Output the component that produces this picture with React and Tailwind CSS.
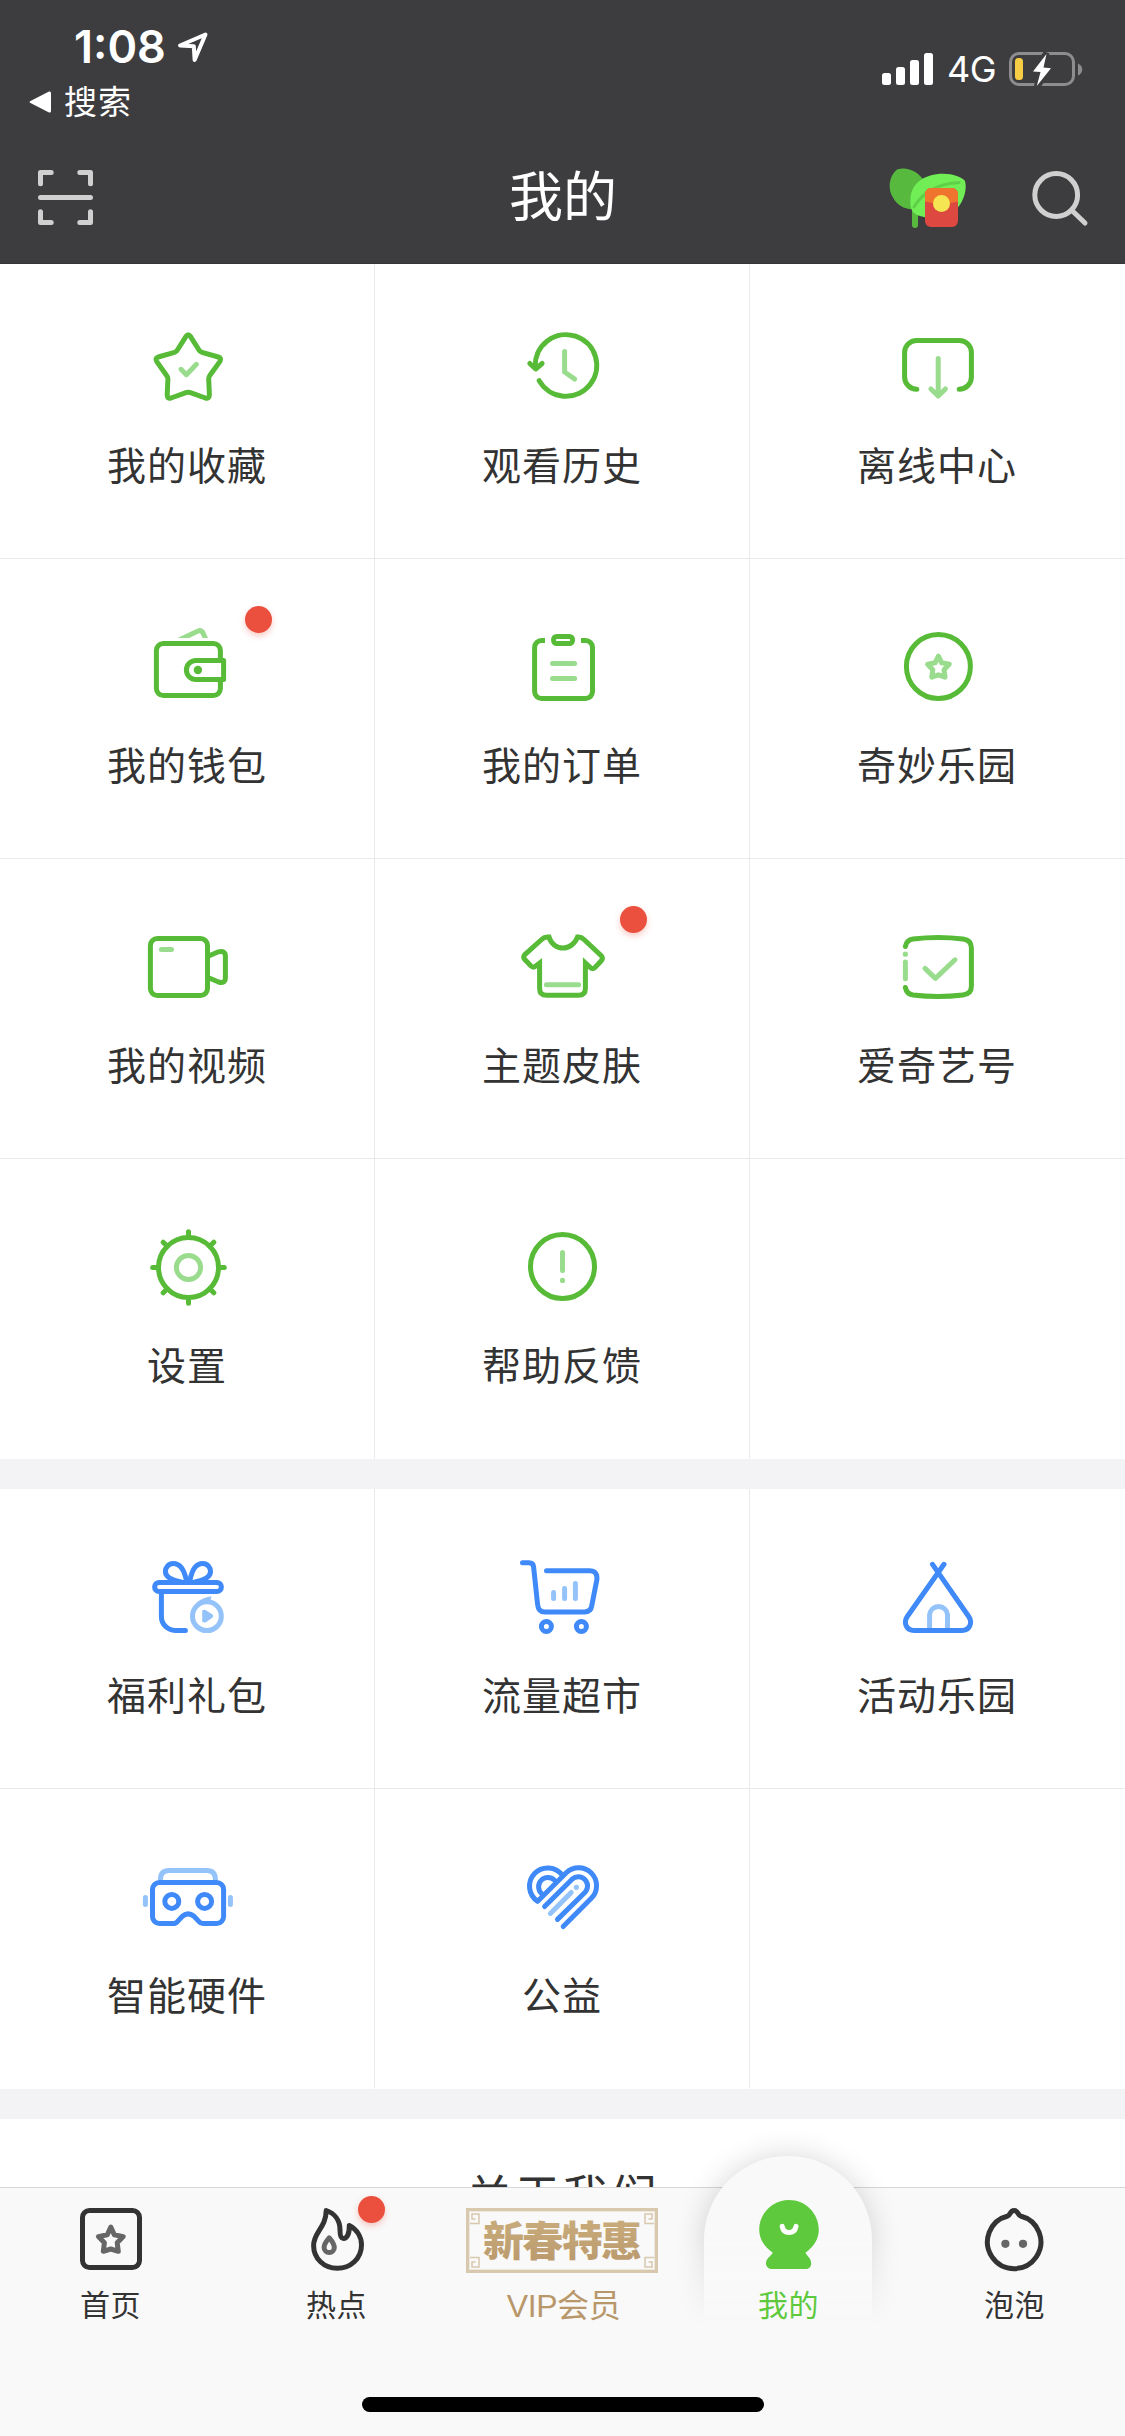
import React from "react";

const SANS = "font-['Inter','Noto_Sans_CJK_SC',sans-serif]";

const G = "#57bb38";
const GL = "#9adc8d";
const B = "#3f8af8";
const BL = "#94c3fa";

function Icon({ color, children }) {
  return (
    <svg
      className="block h-[120px] w-[120px]"
      viewBox="0 0 120 120"
      fill="none"
      stroke={color}
      strokeWidth="5"
      strokeLinecap="round"
      strokeLinejoin="round"
    >
      {children}
    </svg>
  );
}

const Favorite = () => (
  <Icon color={G}>
    <path d="M59 29.3Q61.2 26 63.4 29.3L72 43Q73 44.8 75 45.4L91.3 50Q95 51.2 92.8 54.6L82.8 68.5Q81.6 70 81.7 72L82.4 88Q82.2 92 78.4 91L63.5 85.6Q61.2 84.8 59 85.6L44 91Q40.2 92 40.2 88L40.9 72Q41 70 39.6 68.5L29.8 54.6Q27.6 51.2 31.2 50L47.5 45.4Q49.4 44.8 50.4 43Z" />
    <path stroke={GL} d="M54 62.3L59.4 67.7L69.4 57.3" />
  </Icon>
);

const History = () => (
  <Icon color={G}>
    <path d="M37.2 73.7A30.8 30.8 0 1 0 33.2 60" />
    <path d="M27.8 56.5L33.7 62L40.1 56.5" />
    <path stroke={GL} d="M62.6 44.5V65L72.6 72" />
  </Icon>
);

const Offline = () => (
  <Icon color={G}>
    <path d="M39.8 82.2A12.2 12.2 0 0 1 27.6 70V45.5A12 12 0 0 1 39.6 33.5H82.4A12 12 0 0 1 94.4 45.5V70A12.2 12.2 0 0 1 82.2 82.2" />
    <path stroke={GL} d="M61.2 51.5V88.5M53.9 82L61.2 89L68.4 82" />
  </Icon>
);

const Wallet = () => (
  <Icon color={G}>
    <path stroke={GL} d="M49 34.5L70.5 24.2Q74.2 22.6 76 26L80 35" />
    <path fill="#fff" stroke="none" d="M40 31H90V40H40Z" />
    <rect x="29.4" y="36.5" width="64" height="52" rx="7" />
    <path fill="#fff" strokeLinejoin="round" d="M68.9 53.5H96.6V72.5H68.9A9.5 9.5 0 0 1 68.9 53.5Z" />
    <circle cx="70.9" cy="63" r="4.2" fill={G} stroke="none" />
  </Icon>
);

const Orders = () => (
  <Icon color={G}>
    <path strokeLinecap="butt" d="M43 33.5H39.6A7 7 0 0 0 32.6 40.5V84.5A7 7 0 0 0 39.6 91.5H83.5A7 7 0 0 0 90.5 84.5V40.5A7 7 0 0 0 83.5 33.5H79" />
    <rect x="51.6" y="29.5" width="18.9" height="7" rx="3" />
    <path stroke={GL} d="M50.5 56.4H72.6M50.5 71.4H72.6" />
  </Icon>
);

const Wonder = () => (
  <Icon color={G}>
    <circle cx="61.4" cy="59.5" r="32" />
    <path stroke={GL} d="M61.4 49.2L64.7 55.8L72.2 57.2L67 62.7L68 70.2L61.4 67.8L54.8 70.2L55.8 62.7L50.6 57.2L58.1 55.8Z" />
  </Icon>
);

const Video = () => (
  <Icon color={G}>
    <rect x="23.4" y="31.5" width="57.1" height="57" rx="7" />
    <path d="M81 49.2L91.5 44.8Q98.4 43 98.4 49.5V70.5Q98.4 77 91.5 75L81 70.5" />
    <path stroke={GL} d="M34.4 42.4H44.5" />
  </Icon>
);

const Skin = () => (
  <Icon color={G}>
    <path
      strokeLinejoin="miter"
      strokeLinecap="butt"
      d="M47 30C49 37 55 41 61 41C67 41 73 37 75.5 30H76.5Q79.5 30 82 32.5L99.5 49Q101.3 51.3 99.5 53.5L92.8 60.6Q90.6 62.4 88.4 60.6L83.4 56V81.5Q83.4 88.3 76.5 88.3H44.5Q37.6 88.3 37.6 81.5V56L33.5 59.2Q31.2 61 29 59L22.6 52.3Q20.8 50 22.6 47.8L39.6 32.5Q42.2 30 45.4 30Z"
    />
    <path stroke={GL} d="M44.4 77.7H76.6" />
  </Icon>
);

const Account = () => (
  <Icon color={G}>
    <path d="M28.4 39.5Q29.5 33 36 32Q61 29 86 32Q94.4 33 94.4 41V79Q94.4 87 86 88Q61 91 36 88Q29.5 87 28.4 80.5" />
    <path stroke={GL} d="M28.4 55V71.7M48 61.4L58.4 71.4L78 52.8" />
    <circle cx="28.4" cy="47.2" r="2.6" fill={GL} stroke="none" />
  </Icon>
);

const Settings = () => (
  <Icon color={G}>
    <circle cx="61.5" cy="60.5" r="30" />
    <path d="M61.5 30.5V24.7M61.5 90.5V96.3M31.5 60.5H25.7M91.5 60.5H97.3M40.3 39.3L36.2 35.2M82.7 39.3L86.8 35.2M40.3 81.7L36.2 85.8M82.7 81.7L86.8 85.8" />
    <circle cx="61.5" cy="60.5" r="12.1" stroke={GL} />
  </Icon>
);

const Help = () => (
  <Icon color={G}>
    <circle cx="60.5" cy="59.5" r="32" />
    <path stroke={GL} d="M60.5 45.5V63.5" />
    <circle cx="60.5" cy="73.4" r="2.6" fill={GL} stroke="none" />
  </Icon>
);

const Gift = () => (
  <Icon color={B}>
    <rect x="27.6" y="45.5" width="66.8" height="9" rx="4.5" />
    <path d="M34.4 57V79.5A13.8 13.8 0 0 0 48.2 93.4H58.4" />
    <path d="M59.3 43C57 32 52 26.5 46.3 26.5C41.5 26.5 38.4 30.5 38.4 34.5C38.4 40 46 43.5 54 45" />
    <path d="M63 43C65.2 32 70 26.5 75.7 26.5C80.5 26.5 83.5 30.5 83.5 34.5C83.5 40 76 43.5 68 45" />
    <circle cx="79.9" cy="79.2" r="14.4" stroke={BL} />
    <path fill={BL} stroke="none" d="M68 68C72 62 78 60.5 84.6 59.2L83.2 64Z" />
    <path fill={BL} stroke={BL} strokeWidth="2" d="M76.2 74L78 73.8L85 78.4V79.8L78 84.6L76.2 84.3Z" />
  </Icon>
);

const Cart = () => (
  <Icon color={B}>
    <path d="M20.5 25.8H27Q31.2 25.8 31.6 30L35.6 67.5Q36.3 75 43 75H82.5Q88.8 75 89.8 68.5L94.9 42.5Q95.6 33.7 87.5 33.7H44.5" />
    <path stroke={BL} d="M51.6 55.5V61.5M62.6 51.5V61.5M73.4 46.5V61.5" />
    <circle cx="44.4" cy="89.5" r="5" />
    <circle cx="79.4" cy="89.5" r="5" />
  </Icon>
);

const Tent = () => (
  <Icon color={B}>
    <path stroke={BL} strokeLinecap="butt" d="M52.6 91.5V77.5A9 9 0 0 1 70.5 77.5V91.5" />
    <path d="M67 27.3L30.3 79.5C26 86 29.5 93.5 37 93.5H85C92.5 93.5 96 86 91.7 79.5L55.5 27.3" />
  </Icon>
);

const Headset = () => (
  <Icon color={B}>
    <path stroke={BL} strokeLinecap="butt" d="M33.4 43.5V42Q33.8 33.5 42 33.5H80Q88 33.5 88.4 42V43.5" />
    <path stroke={BL} d="M18.4 60.5V67.5M103.4 60.5V67.5" />
    <path d="M32.5 45.5H89.6A7 7 0 0 1 96.6 52.5V79.5A7 7 0 0 1 89.6 86.5H76Q73.5 86.5 71.8 84.4L67 79.2Q61.2 74.5 55.4 79.2L50.6 84.4Q49 86.5 46.4 86.5H32.5A7 7 0 0 1 25.5 79.5V52.5A7 7 0 0 1 32.5 45.5Z" />
    <circle cx="44.8" cy="64.4" r="7" />
    <circle cx="77.6" cy="64.4" r="7" />
  </Icon>
);

const Charity = () => (
  <Icon color={B}>
    <path d="M60.5 38.5A18.2 18.2 0 1 0 35.7 64.3L64 36A17.8 17.8 0 0 1 89.3 61.3L61.2 89.5" />
    <path d="M52.3 43A9.2 9.2 0 1 0 39.5 56.5" />
    <path d="M42.6 69.5L70.1 42.2A9.2 9.2 0 0 1 83.1 55.2L55.5 82.4" />
    <path stroke={BL} d="M48.4 76.4L69.2 55.5" />
    <circle cx="74.4" cy="50.3" r="2.6" fill={BL} stroke="none" />
  </Icon>
);

const Dot = ({ className }) => (
  <span
    className={`absolute h-[27px] w-[27px] rounded-full bg-[#eb4f3d] shadow-[0_3px_6px_rgba(235,79,61,0.3)] ${className}`}
  />
);

function Cell({ item, first, last }) {
  return (
    <div
      className={`relative flex flex-col items-center justify-end gap-[10px] border-r border-b border-r-[#e9e9e9] pb-[65px] nth-[3n]:border-r-transparent ${
        first ? "h-[295px]" : "h-[300px]"
      } ${last ? "border-b-transparent" : "border-b-[#e9e9e9]"}`}
    >
      {item && (
        <>
          <item.icon />
          <span className="h-[56px] text-[39px] leading-[57px] tracking-[1px] whitespace-nowrap text-[#333]">
            {item.label}
          </span>
          {item.dot && <Dot className="top-[47px] left-[245px]" />}
        </>
      )}
    </div>
  );
}

const services = [
  { label: "我的收藏", icon: Favorite },
  { label: "观看历史", icon: History },
  { label: "离线中心", icon: Offline },
  { label: "我的钱包", icon: Wallet, dot: true },
  { label: "我的订单", icon: Orders },
  { label: "奇妙乐园", icon: Wonder },
  { label: "我的视频", icon: Video },
  { label: "主题皮肤", icon: Skin, dot: true },
  { label: "爱奇艺号", icon: Account },
  { label: "设置", icon: Settings },
  { label: "帮助反馈", icon: Help },
  null,
];

const extras = [
  { label: "福利礼包", icon: Gift },
  { label: "流量超市", icon: Cart },
  { label: "活动乐园", icon: Tent },
  { label: "智能硬件", icon: Headset },
  { label: "公益", icon: Charity },
  null,
];

function Header() {
  return (
    <header className="flex h-[264px] shrink-0 flex-col bg-[#3d3d3f] text-white">
      <div className="flex h-[132px] justify-between">
        <div className="flex flex-col pt-[20px] pl-[29px]">
          <div className="flex h-[54px] items-center gap-[10px] pl-[45px]">
            <span className="text-[45px] leading-[54px] font-semibold">1:08</span>
            <svg className="h-[34px] w-[34px]" viewBox="0 0 34 34" fill="none" stroke="#fff" strokeWidth="4" strokeLinejoin="round">
              <path d="M29.5 4.5L4 15.500L17.800 16.200L18.600 30Z" />
            </svg>
          </div>
          <div className="mt-[4px] flex h-[48px] items-center gap-[13px]">
            <svg className="h-[22px] w-[22px]" viewBox="0 0 22 22" fill="#fff">
              <path d="M1 10.200L20 .6Q22 0 22 2V20Q22 22 20 21.400L1 11.800Q0 11 1 10.200Z" />
            </svg>
            <span className="text-[33px] leading-[48px] tracking-[1px]">搜索</span>
          </div>
        </div>
        <div className="mt-[52px] flex h-[34px] items-center pr-[42px]">
          <svg className="h-[34px] w-[52px]" viewBox="0 0 52 34" fill="#fff">
            <rect x="0" y="21" width="9" height="12" rx="2.5" />
            <rect x="14" y="15" width="9" height="18" rx="2.5" />
            <rect x="28" y="8" width="9" height="25" rx="2.5" />
            <rect x="42" y="1" width="9" height="32" rx="2.5" />
          </svg>
          <span className="ml-[13px] w-[62px] text-[36px] leading-[34px] tracking-[-0.5px]">4G</span>
          <svg className="h-[36px] w-[74px]" viewBox="0 0 74 36" fill="none">
            <rect x="1.5" y="2.5" width="63" height="31" rx="8.5" stroke="#8d8d8f" strokeWidth="3" />
            <path d="M69 12.5Q73.2 14.5 73.2 18.5Q73.2 22.5 69 24.5Z" fill="#8d8d8f" />
            <rect x="6" y="7" width="8" height="22" rx="3.5" fill="#f7cd46" />
            <path d="M37.5 2L24 20.5L31.5 21L27.8 36L42 17.3L34.5 16.6Z" fill="#fff" stroke="#3d3d3f" strokeWidth="6" />
            <path d="M37.5 3L24 20.5L31.5 21L27.8 35L42 17.3L34.5 16.6Z" fill="#fff" />
          </svg>
        </div>
      </div>
      <div className="grid h-[132px] grid-cols-[1fr_auto_1fr] items-center border-b border-[#363638] pr-[35px] pl-[36px]">
        <svg className="h-[60px] w-[60px]" viewBox="0 0 60 60" fill="none" stroke="#d0d0d0" strokeWidth="5" strokeLinecap="round" strokeLinejoin="round">
          <path d="M15.2 4.5H4.5V15.8M43.8 4.5H54.5V15.8M15.2 54.5H4.5V43.8M43.8 54.5H54.5V43.8M4.5 29.5H54.5" />
        </svg>
        <h1 className="text-[54px] leading-[60px]">我的</h1>
        <div className="flex items-center gap-[53px] justify-self-end">
          <svg className="h-[70px] w-[90px]" viewBox="0 0 90 70" fill="none">
            <path d="M30 44V62" stroke="#57ba3e" strokeWidth="6" strokeLinecap="round" />
            <path d="M12 6.5C3 14 3 27 8 34.5C12 42 19 46 27 46.2L39 17.5C33 8.5 22 3 12 6.5Z" fill="#57ba3e" />
            <path d="M25.5 36C26 20 40 10.7 58 10.7C68 10.7 77 14 80 18C82.5 27 78 39 72.5 45L60 54L42 55C34 52 24 53 25.5 36Z" fill="#71ee55" />
            <path d="M29 44Q43 21 74 19.5" stroke="#5fcf47" strokeWidth="3" strokeLinecap="round" />
            <rect x="40" y="25" width="33" height="39" rx="6" fill="#dd4840" />
            <path d="M40 38.5V31A6 6 0 0 1 46 25H67A6 6 0 0 1 73 31V38.5Q56.5 43 40 38.5Z" fill="#ef742d" />
            <circle cx="56.5" cy="40.4" r="8.5" fill="#f5e553" />
          </svg>
          <svg className="h-[62px] w-[62px]" viewBox="0 0 62 62" fill="none" stroke="#d0d0d0" strokeWidth="5" strokeLinecap="round">
            <circle cx="28.2" cy="28" r="21.4" />
            <path d="M44.5 44L57 56" />
          </svg>
        </div>
      </div>
    </header>
  );
}

const tabSvg = "block h-[80px] w-[101px]";

const HomeIcon = () => (
  <svg className={tabSvg} viewBox="0 0 101 80" fill="none" stroke="#333" strokeWidth="5" strokeLinejoin="round">
    <rect x="22.5" y="14.5" width="57" height="57" rx="7" />
    <path stroke="#666" d="M50.8 31L54.3 38.7L63.2 40.6L57.2 46.8L58.3 55.3L50.8 53L43.3 55.3L44.4 46.8L38.4 40.6L47.3 38.7Z" />
  </svg>
);

const HotIcon = () => (
  <svg className={tabSvg} viewBox="0 0 101 80" fill="none" stroke="#333" strokeWidth="5" strokeLinejoin="round">
    <path d="M40.2 14.5C49 17.5 54 25 54 34C54 39 54.5 42.5 57.5 42.5C61 42.5 63.5 38 63.3 29.5C71 33.5 75.5 41 75.5 49C75.5 62.5 64.5 72.3 51.2 72.3C38 72.3 27.6 62.5 27.6 49.5C27.6 36 40 32 40.2 14.5Z" />
    <path stroke="#666" d="M43.2 41.8C46 45 48.3 47.5 48.3 51.5A5.1 5.1 0 0 1 38.1 51.5C38.1 47.5 40.5 45 43.2 41.8Z" />
  </svg>
);

const MeIcon = () => (
  <svg className={tabSvg} viewBox="0 0 101 80" fill="none">
    <path
      fill="#5fc93e"
      d="M51 4C67.5 4 80.8 17.5 80.8 33.5C80.8 43 76 50.5 67.4 56.8C70 61 73.2 62.5 73.2 67.5C73.2 71 70.8 73 67.8 73H34.2C31 73 28 71 28 67.5C28 62.5 32 61 34.8 56.8C26 50.5 21.2 43 21.2 33.5C21.2 17.5 34.5 4 51 4Z"
    />
    <path stroke="#fff" strokeWidth="5" strokeLinecap="round" d="M44.2 30.4C45 34.5 47.5 36.5 51 36.5C54.6 36.5 57.2 34.5 58 30.4" />
  </svg>
);

const BubbleIcon = () => (
  <svg className={tabSvg} viewBox="0 0 101 80" fill="none" stroke="#333" strokeWidth="5" strokeLinejoin="round">
    <path d="M56.5 20A26.7 26.7 0 1 1 43.8 20C46.4 19 46 14.5 50.1 14.5C54.2 14.5 53.8 19 56.5 20Z" />
    <circle cx="41.4" cy="47.8" r="4.1" fill="#666" stroke="none" />
    <circle cx="59" cy="47.8" r="4.1" fill="#666" stroke="none" />
  </svg>
);

const corner = "M4 15.5H13V6H6V11H9.5";

const VipBanner = () => (
  <svg className="block h-[80px] w-[193px]" viewBox="0 0 193 80" fill="none">
    <defs>
      <linearGradient id="gold" x1="0" y1="0" x2="0" y2="1">
        <stop offset="0" stopColor="#ccb080" />
        <stop offset="1" stopColor="#b9986b" />
      </linearGradient>
    </defs>
    <rect x="1.5" y="13.5" width="189" height="62" stroke="#d8c8ae" strokeWidth="3" />
    <rect x="3.5" y="15.5" width="185" height="58" stroke="#eee7db" strokeWidth="1" />
    <g stroke="#d8c8ae" strokeWidth="1.5">
      <path transform="translate(0 12)" d={corner} />
      <path transform="matrix(-1 0 0 1 192 12)" d={corner} />
      <path transform="matrix(1 0 0 -1 0 77)" d={corner} />
      <path transform="matrix(-1 0 0 -1 192 77)" d={corner} />
    </g>
    <text
      className="font-['Noto_Sans_CJK_SC',sans-serif] text-[41px] font-black"
      x="17"
      y="60"
      textLength="159"
      fill="url(#gold)"
    >
      新春特惠
    </text>
  </svg>
);

const tabs = [
  { label: "首页", icon: HomeIcon },
  { label: "热点", icon: HotIcon, dot: true },
  {
    label: "VIP会员",
    icon: VipBanner,
    style: "pl-[2px] pt-[1px] text-[32px] tracking-[-0.4px] text-[#b8976a] font-['Liberation_Sans','Noto_Sans_CJK_SC',sans-serif]",
  },
  { label: "我的", icon: MeIcon, style: "text-[30px] tracking-[0.5px] text-[#5fc93e]", active: true },
  { label: "泡泡", icon: BubbleIcon },
];

function TabBar() {
  return (
    <nav className="relative flex h-[249px] shrink-0 flex-col items-center border-t border-[#d6d6d6] bg-[#f9f9f9]">
      <div className="-ml-[2.5px] grid w-[1130px] shrink-0 grid-cols-5 self-start">
        {tabs.map((tab) => (
          <div key={tab.label} className="relative flex flex-col items-center pt-[8px]">
            {tab.active && (
              <div className="absolute -top-[72px] left-[-11.5px] overflow-hidden px-[40px] pt-[40px] [mask-image:linear-gradient(to_bottom,black_55%,transparent_100%)]">
                <div className="h-[172px] w-[168px] rounded-t-[84px] bg-[#f9f9f9] shadow-[0_0_30px_rgba(0,0,0,0.16)]" />
              </div>
            )}
            <div className="relative">
              <tab.icon />
            </div>
            <span
              className={`relative mt-[7px] h-[44px] leading-[44px] whitespace-nowrap ${
                tab.style || "text-[30px] tracking-[0.5px] text-[#333]"
              }`}
            >
              {tab.label}
            </span>
            {tab.dot && <Dot className="top-[8px] left-[134.5px]" />}
          </div>
        ))}
      </div>
      <div className="mt-[70px] h-[15px] w-[402px] rounded-full bg-black" />
    </nav>
  );
}

export default function App() {
  return (
    <div className={`flex h-[2436px] w-[1125px] flex-col overflow-hidden bg-white ${SANS}`}>
      <Header />
      <main className="flex min-h-0 flex-1 flex-col overflow-hidden">
        <section className="grid shrink-0 grid-cols-3">
          {services.map((item, i) => (
            <Cell key={i} item={item} first={i < 3} last={i >= services.length - 3} />
          ))}
        </section>
        <div className="h-[30px] shrink-0 bg-[#f3f3f5]" />
        <section className="grid shrink-0 grid-cols-3">
          {extras.map((item, i) => (
            <Cell key={i} item={item} last={i >= extras.length - 3} />
          ))}
        </section>
        <div className="h-[30px] shrink-0 bg-[#f3f3f5]" />
        <div className="shrink-0 pt-[43px] text-center text-[46px] leading-[68px] tracking-[2px] text-[#333]">
          关于我们
        </div>
      </main>
      <TabBar />
    </div>
  );
}
